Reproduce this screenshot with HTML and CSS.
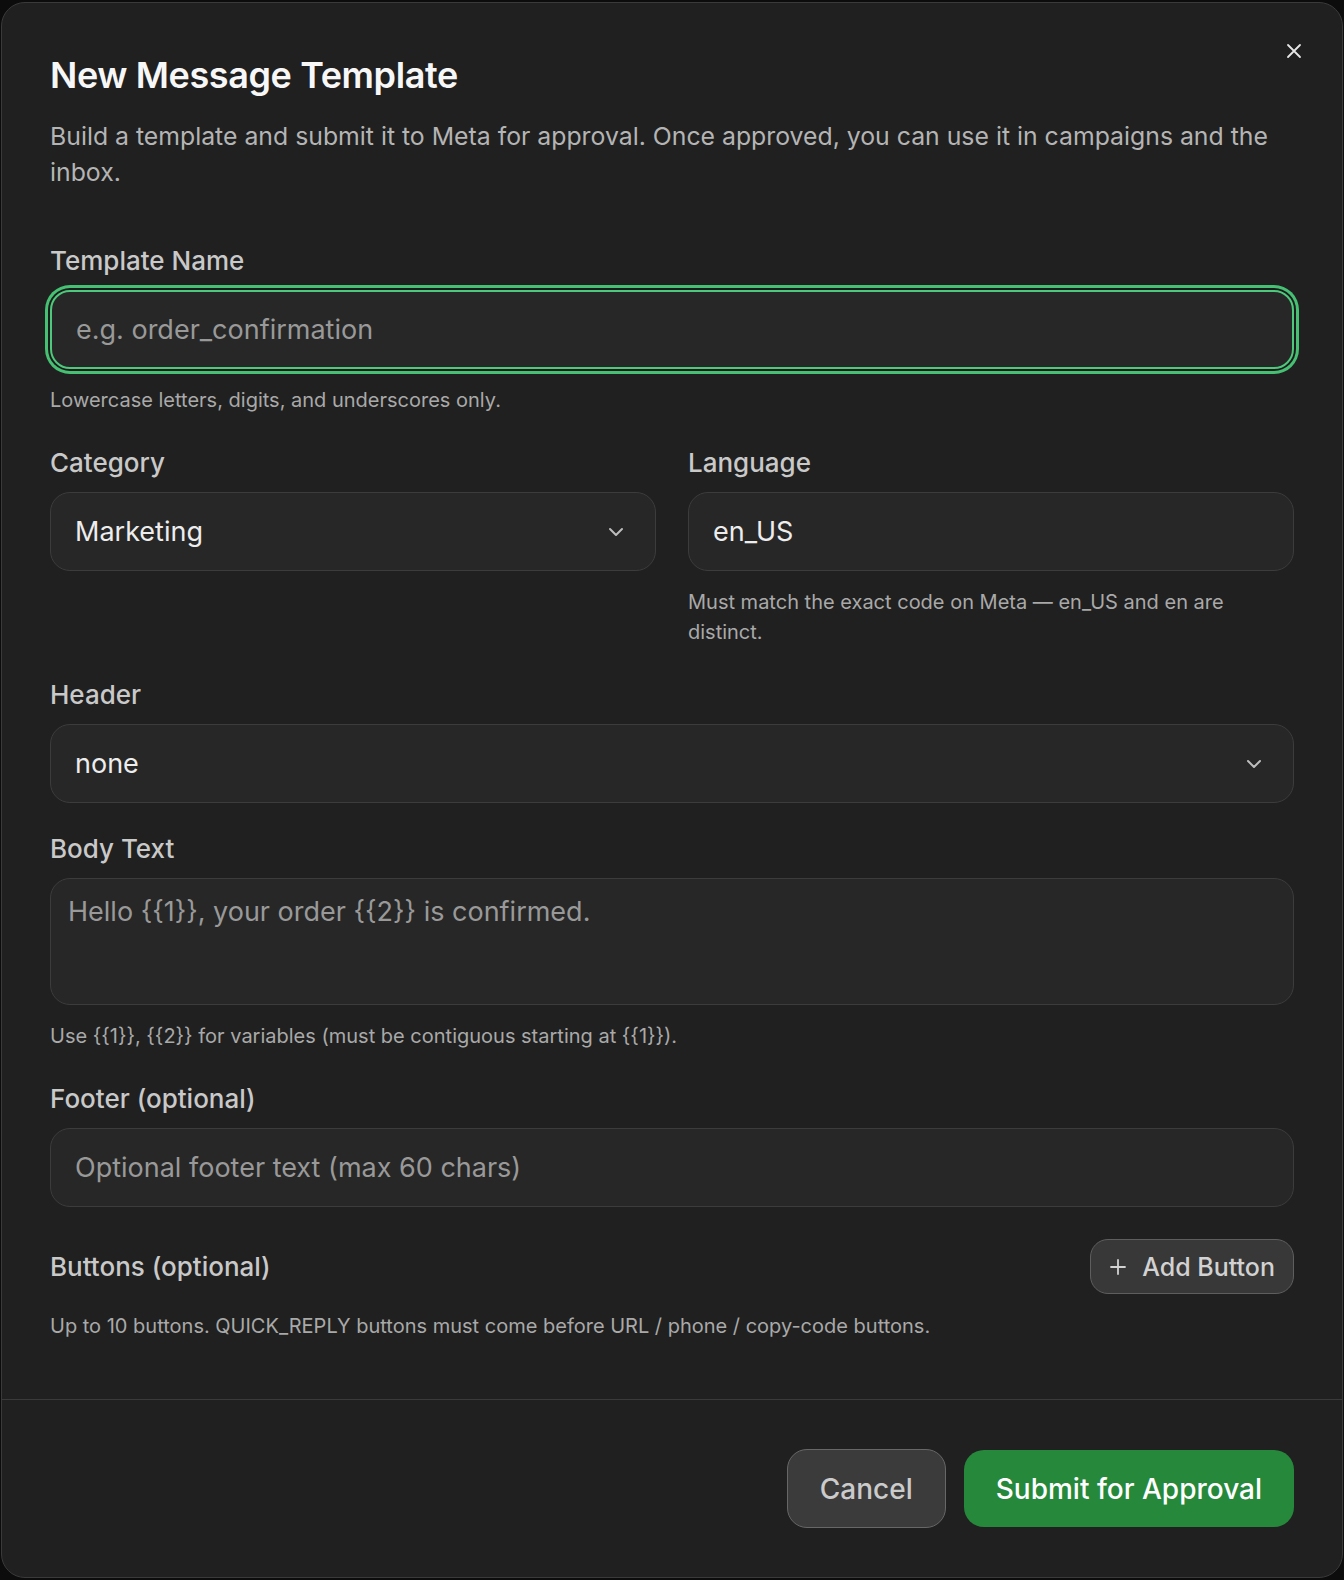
FILE: index.html
```html
<!DOCTYPE html>
<html lang="en">
  <head>
    <meta charset="UTF-8" />
    <meta name="viewport" content="width=device-width, initial-scale=1.0" />
    <title>New Message Template</title>
    <link rel="stylesheet" href="styles.css">
  </head>
  <body>
    <div class="dialog">
      <button class="close" aria-label="Close">
        <svg width="24" height="24" viewBox="0 0 24 24" fill="none" stroke="currentColor" stroke-width="1.8" stroke-linecap="round"><path d="M18 6 6 18M6 6l12 12"/></svg>
      </button>

      <div class="dialog-body">
        <h2 class="title">New Message Template</h2>
        <p class="desc">Build a template and submit it to Meta for approval. Once approved, you can use it in campaigns and the inbox.</p>

        <div class="form">
          <div class="field">
            <label class="label">Template Name</label>
            <input class="input focused" placeholder="e.g. order_confirmation" />
            <p class="hint">Lowercase letters, digits, and underscores only.</p>
          </div>

          <div class="row">
            <div class="field">
              <label class="label">Category</label>
              <div class="input select">
                <span class="value">Marketing</span>
                <svg class="chev" width="24" height="24" viewBox="0 0 24 24" fill="none" stroke="currentColor" stroke-width="2" stroke-linecap="round" stroke-linejoin="round"><path d="m6 9 6 6 6-6"/></svg>
              </div>
            </div>
            <div class="field">
              <label class="label">Language</label>
              <input class="input" value="en_US" />
              <p class="hint">Must match the exact code on Meta — en_US and en are distinct.</p>
            </div>
          </div>

          <div class="field">
            <label class="label">Header</label>
            <div class="input select">
              <span class="value">none</span>
              <svg class="chev" width="24" height="24" viewBox="0 0 24 24" fill="none" stroke="currentColor" stroke-width="2" stroke-linecap="round" stroke-linejoin="round"><path d="m6 9 6 6 6-6"/></svg>
            </div>
          </div>

          <div class="field field-body">
            <label class="label">Body Text</label>
            <textarea class="input textarea" placeholder="Hello {{1}}, your order {{2}} is confirmed."></textarea>
            <p class="hint">Use {{1}}, {{2}} for variables (must be contiguous starting at {{1}}).</p>
          </div>

          <div class="field">
            <label class="label">Footer (optional)</label>
            <input class="input" placeholder="Optional footer text (max 60 chars)" />
          </div>

          <div class="field field-buttons">
            <div class="buttons-head">
              <label class="label">Buttons (optional)</label>
              <button class="btn-add">
                <svg width="24" height="24" viewBox="0 0 24 24" fill="none" stroke="currentColor" stroke-width="1.8" stroke-linecap="round"><path d="M5 12h14M12 5v14"/></svg>
                Add Button
              </button>
            </div>
            <p class="hint">Up to 10 buttons. QUICK_REPLY buttons must come before URL / phone / copy-code buttons.</p>
          </div>
        </div>
      </div>

      <div class="dialog-footer">
        <button class="btn btn-cancel">Cancel</button>
        <button class="btn btn-submit">Submit for Approval</button>
      </div>
    </div>
  </body>
</html>
```

FILE: styles.css
```css
* {
  box-sizing: border-box;
}

body {
  margin: 0;
  padding: 2px 1px 0;
  background-color: #0c0c0c;
  font-family: Inter, "Noto Sans", sans-serif;
  color: #e8e8e8;
}

.dialog {
  position: relative;
  background-color: #202020;
  border: 1px solid #3a3a3a;
  border-radius: 24px;
  overflow: hidden;
}

.close {
  position: absolute;
  top: 36px;
  right: 36px;
  width: 24px;
  height: 24px;
  padding: 0;
  border: none;
  background: none;
  color: #e6e6e6;
  display: flex;
}

.dialog-body {
  padding: 48px 48px 58px;
}

.title {
  margin: 0;
  font-size: 36px;
  line-height: 48px;
  font-weight: 600;
  letter-spacing: -0.4px;
  color: #f7f7f7;
}

.desc {
  margin: 19px 0 0;
  font-size: 24.8px;
  line-height: 36px;
  color: #b4b4b4;
}

.form {
  margin-top: 59px;
  display: flex;
  flex-direction: column;
  gap: 36px;
}

.field {
  display: flex;
  flex-direction: column;
}

.field-body {
  margin-top: -2px;
}

.field-buttons {
  margin-top: -4px;
}

.row {
  display: grid;
  grid-template-columns: 1fr 1fr;
  gap: 32px;
}

.label {
  font-size: 26px;
  line-height: 24px;
  font-weight: 500;
  color: #c9c9c9;
  margin-bottom: 17px;
}

.input {
  height: 79px;
  width: 100%;
  padding: 0 24px;
  background-color: #272727;
  border: 1.5px solid #3c3c3c;
  border-radius: 20px;
  font-family: inherit;
  font-size: 27px;
  color: #ededed;
  outline: none;
}

.input::placeholder {
  color: #999999;
}

.input.focused {
  border: 2px solid #4cc97a;
  box-shadow: 0 0 0 2px #1c1c1c, 0 0 0 5px #46c173;
}

.select {
  display: flex;
  align-items: center;
  justify-content: space-between;
  padding-right: 27px;
}

.chev {
  color: #bdbdbd;
}

.textarea {
  height: 127px;
  padding: 15px 17px;
  line-height: 36px;
  resize: none;
}

.hint {
  margin: 16px 0 0;
  font-size: 20px;
  line-height: 30px;
  color: #a9a9a9;
}

.buttons-head {
  display: flex;
  align-items: center;
  justify-content: space-between;
}

.buttons-head .label {
  margin-bottom: 0;
}

.buttons-head + .hint {
  margin-top: 17px;
}

.btn-add {
  height: 55px;
  display: flex;
  align-items: center;
  gap: 12px;
  padding: 0 18px 0 15px;
  background-color: #383838;
  border: 1.5px solid #5e5e5e;
  border-radius: 18px;
  font-family: inherit;
  font-size: 25px;
  font-weight: 500;
  color: #d2d2d2;
}

.dialog-footer {
  border-top: 1px solid #3a3a3a;
  padding: 49px 48px 49px;
  display: flex;
  justify-content: flex-end;
  gap: 18px;
}

.btn {
  height: 79px;
  padding: 0 32px;
  border-radius: 20px;
  font-family: inherit;
  font-size: 28px;
  font-weight: 500;
}

.btn-cancel {
  background-color: #3b3b3b;
  border: 1.5px solid #676767;
  color: #cbcbcb;
}

.btn-submit {
  height: 77px;
  margin-top: 1px;
  background-color: #26883b;
  border: none;
  color: #ffffff;
}
```
